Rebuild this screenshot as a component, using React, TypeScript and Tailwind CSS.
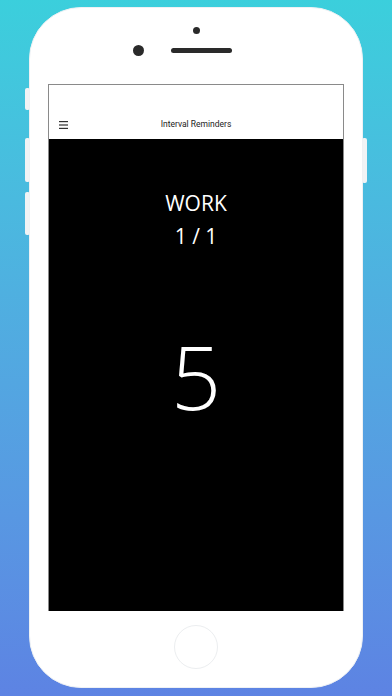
import React from 'react';

const SideButton: React.FC<{ className: string }> = ({ className }) => (
    <div className={`absolute w-[5px] bg-[#f1f3f5] rounded-[2px] ${className}`} />
);

const App: React.FC = () => {
    return (
        <div className="relative w-[392px] h-[696px] overflow-hidden bg-gradient-to-b from-[#3bcfdc] to-[#5d83e3] flex justify-center pt-[7px]">
            {/* side buttons */}
            <SideButton className="left-[25px] top-[88px] h-[22px]" />
            <SideButton className="left-[25px] top-[138px] h-[44px]" />
            <SideButton className="left-[25px] top-[192px] h-[43px]" />
            <SideButton className="left-[362px] top-[138px] h-[45px]" />

            {/* phone body */}
            <div className="relative w-[334px] h-[681px] bg-white rounded-[52px] border border-[#eef1f4] flex flex-col items-center">
                <div className="mt-[19px] w-[7px] h-[7px] rounded-full bg-[#2a2a2a]" />
                <div className="mt-[11px] flex items-center w-full">
                    <div className="ml-[103px] w-[11px] h-[11px] rounded-full bg-[#2a2a2a]" />
                    <div className="ml-[27px] w-[61px] h-[5px] rounded-full bg-[#2a2a2a]" />
                </div>

                {/* screen */}
                <div className="mt-[28px] w-[296px] h-[527px] flex flex-col border-t border-x border-[#8a8a8a]">
                    <div className="h-[54px] bg-white flex items-end pb-[10px] relative" style={{ fontFamily: 'Roboto, "Noto Sans", sans-serif' }}>
                        <svg className="ml-[10px]" width="10" height="8" viewBox="0 0 10 8">
                            <rect x="0" y="0" width="9" height="1.2" fill="#333" />
                            <rect x="0" y="3.4" width="9" height="1.2" fill="#333" />
                            <rect x="0" y="6.8" width="9" height="1.2" fill="#333" />
                        </svg>
                        <div className="absolute left-0 right-0 bottom-[8px] text-center text-[8.5px] text-[#222]">
                            Interval Reminders
                        </div>
                    </div>
                    <div
                        className="flex-1 bg-black flex flex-col items-center text-white"
                        style={{ fontFamily: '"Open Sans", "Noto Sans", sans-serif' }}
                    >
                        <div className="mt-[50px] text-[21px] font-normal leading-[28px]">WORK</div>
                        <div className="mt-[5px] text-[21px] font-normal leading-[28px]">1 / 1</div>
                        <div className="mt-[76px] text-[88px] font-light leading-[100px]">5</div>
                    </div>
                </div>

                {/* home button */}
                <div className="mt-[14px] w-[44px] h-[44px] rounded-full border-[1.5px] border-[#eceef0]" />
            </div>
        </div>
    );
};

export default App;
